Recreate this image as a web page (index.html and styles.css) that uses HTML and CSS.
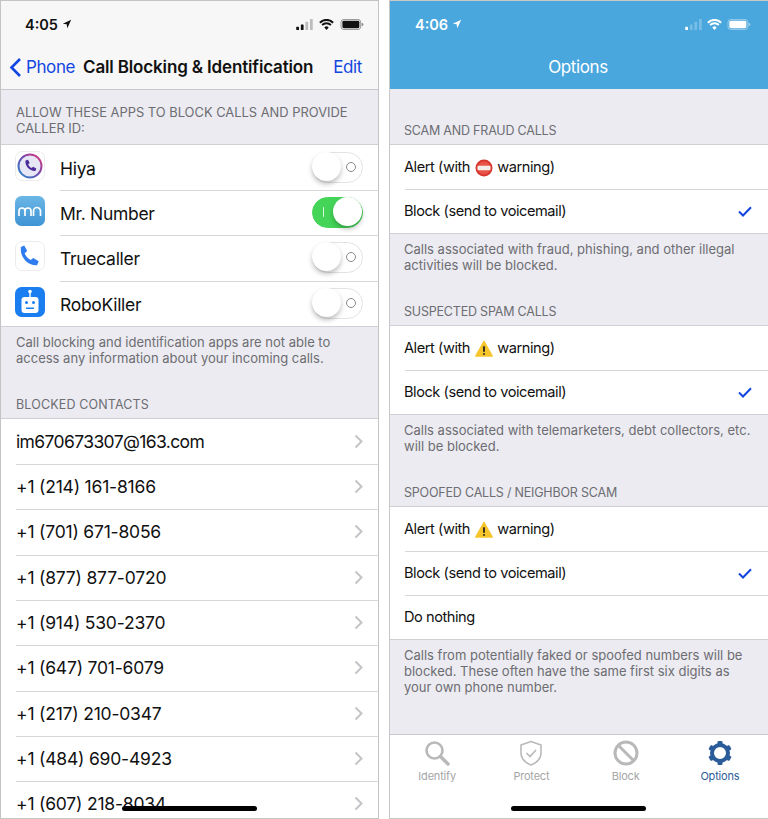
FILE: index.html

```html
<!DOCTYPE html>
<html>
<head>
  <meta charset="UTF-8">
  <title>Call Blocking &amp; Identification</title>
  <link rel="stylesheet" href="styles.css">
</head>
<body>

<div class="screens">

  <!-- left phone: system settings -->
  <div class="phone phone-left">
    <div class="bar">
      <div class="status">
        <span class="time">4:05
          <svg class="arrow" viewBox="0 0 12 12"><path d="M11 1 L1 5.6 L5.6 6.4 L6.4 11 Z"/></svg>
        </span>
        <span class="status-icons">
          <svg class="signal" viewBox="0 0 18 12"><rect x="0" y="8.5" width="3" height="3.5" rx=".6"/><rect x="5" y="6" width="3" height="6" rx=".6"/><rect class="off" x="10" y="3" width="3" height="9" rx=".6"/><rect class="off" x="15" y="0" width="3" height="12" rx=".6"/></svg>
          <svg class="wifi" viewBox="0 0 16 12"><path d="M8 12 L5.6 9.2 A3.4 3.4 0 0 1 10.4 9.2 Z M3.9 7.4 L2.5 5.8 A7.8 7.8 0 0 1 13.5 5.8 L12.1 7.4 A5.8 5.8 0 0 0 3.9 7.4 Z M1.6 4.8 L0 3.2 A11.3 11.3 0 0 1 16 3.2 L14.4 4.8 A9.1 9.1 0 0 0 1.6 4.8 Z"/></svg>
          <svg class="battery" viewBox="0 0 25 12"><rect class="shell" x=".5" y=".5" width="21.5" height="11" rx="3"/><rect x="2" y="2" width="18.5" height="8" rx="1.5"/><path class="nub" d="M23 4 a2 2 0 0 1 0 4 Z"/></svg>
        </span>
      </div>
      <div class="nav">
        <span class="back">
          <svg class="chevron-back" viewBox="0 0 13 21"><path d="M11 2 L2.5 10.5 L11 19"/></svg>
          Phone
        </span>
        <span class="nav-title">Call Blocking &amp; Identification</span>
        <span class="nav-action">Edit</span>
      </div>
    </div>

    <div class="content">
      <div class="head head-apps">ALLOW THESE APPS TO BLOCK CALLS AND PROVIDE CALLER ID:</div>
      <div class="list">
        <div class="row app-row">
          <svg class="app-icon" viewBox="0 0 30 30">
            <defs>
              <linearGradient id="hiyaRing" x1="0" y1="1" x2="1" y2="0"><stop offset="0" stop-color="#2f8fd0"/><stop offset=".5" stop-color="#6a4bb0"/><stop offset="1" stop-color="#e8387c"/></linearGradient>
            </defs>
            <rect x=".5" y=".5" width="29" height="29" rx="6.5" fill="#fff" stroke="#ececec"/>
            <circle cx="15" cy="15" r="11.5" fill="#e6e6f4" stroke="url(#hiyaRing)" stroke-width="2"/>
            <path d="M10.5 9.5 l2.5 -.8 l1.7 3.3 l-1.5 1.3 c.5 1.7 1.8 3.1 3.5 3.8 l1.4 -1.4 l3.2 1.9 l-.9 2.4 c-5.5 .5 -10.8 -5.3 -9.9 -10.5 Z" fill="#4b2a9a"/>
          </svg>
          <span class="row-label">Hiya</span>
          <span class="switch"><span class="switch-ring"></span><span class="knob"></span></span>
        </div>
        <div class="row app-row">
          <svg class="app-icon" viewBox="0 0 30 30">
            <defs>
              <linearGradient id="mrBg" x1="0" y1="0" x2="0" y2="1"><stop offset="0" stop-color="#6bb6e6"/><stop offset="1" stop-color="#3f94d4"/></linearGradient>
            </defs>
            <rect width="30" height="30" rx="6.5" fill="url(#mrBg)"/>
            <path d="M4 20 v-5 a3 3 0 0 1 6 0 v5 M10 15 a3 3 0 0 1 6 0 v5 M18.5 20 v-5 a3.5 3.5 0 0 1 7 0 v5" fill="none" stroke="#fff" stroke-width="1.7"/>
          </svg>
          <span class="row-label">Mr. Number</span>
          <span class="switch switch-on"><span class="switch-bar"></span><span class="knob"></span></span>
        </div>
        <div class="row app-row">
          <svg class="app-icon" viewBox="0 0 30 30">
            <rect x=".5" y=".5" width="29" height="29" rx="6.5" fill="#fff" stroke="#ececec"/>
            <path d="M5 6.5 l4.2 -2 l3 5.5 l-2.5 2.3 c1 2.9 3 5.3 6 6.6 l2.5 -2 l5.5 3.3 l-1.7 4 c-9.5 1 -17.5 -9 -16 -17.7 Z" fill="#2f7cf0"/>
          </svg>
          <span class="row-label">Truecaller</span>
          <span class="switch"><span class="switch-ring"></span><span class="knob"></span></span>
        </div>
        <div class="row app-row">
          <svg class="app-icon" viewBox="0 0 30 30">
            <rect width="30" height="30" rx="6.5" fill="#1a7df0"/>
            <circle cx="15" cy="4.5" r="1.8" fill="#fff"/>
            <rect x="14.3" y="5" width="1.4" height="5" fill="#fff"/>
            <rect x="6.5" y="10" width="17" height="16" rx="3" fill="#fff"/>
            <circle cx="11.5" cy="15.5" r="1.5" fill="#1a7df0"/>
            <circle cx="18.5" cy="15.5" r="1.5" fill="#1a7df0"/>
            <rect x="11" y="20.5" width="8" height="1.5" fill="#1a7df0"/>
          </svg>
          <span class="row-label">RoboKiller</span>
          <span class="switch"><span class="switch-ring"></span><span class="knob"></span></span>
        </div>
      </div>
      <div class="foot foot-apps">Call blocking and identification apps are not able to access any information about your incoming calls.</div>

      <div class="head head-blocked">BLOCKED CONTACTS</div>
      <div class="list">
        <div class="row contact-row"><span class="row-label contact-email">im670673307@163.com</span><svg class="chevron" viewBox="0 0 9 15"><path d="M1.5 1.5 L7.5 7.5 L1.5 13.5"/></svg></div>
        <div class="row contact-row"><span class="row-label">+1 (214) 161-8166</span><svg class="chevron" viewBox="0 0 9 15"><path d="M1.5 1.5 L7.5 7.5 L1.5 13.5"/></svg></div>
        <div class="row contact-row"><span class="row-label">+1 (701) 671-8056</span><svg class="chevron" viewBox="0 0 9 15"><path d="M1.5 1.5 L7.5 7.5 L1.5 13.5"/></svg></div>
        <div class="row contact-row"><span class="row-label">+1 (877) 877-0720</span><svg class="chevron" viewBox="0 0 9 15"><path d="M1.5 1.5 L7.5 7.5 L1.5 13.5"/></svg></div>
        <div class="row contact-row"><span class="row-label">+1 (914) 530-2370</span><svg class="chevron" viewBox="0 0 9 15"><path d="M1.5 1.5 L7.5 7.5 L1.5 13.5"/></svg></div>
        <div class="row contact-row"><span class="row-label">+1 (647) 701-6079</span><svg class="chevron" viewBox="0 0 9 15"><path d="M1.5 1.5 L7.5 7.5 L1.5 13.5"/></svg></div>
        <div class="row contact-row"><span class="row-label">+1 (217) 210-0347</span><svg class="chevron" viewBox="0 0 9 15"><path d="M1.5 1.5 L7.5 7.5 L1.5 13.5"/></svg></div>
        <div class="row contact-row"><span class="row-label">+1 (484) 690-4923</span><svg class="chevron" viewBox="0 0 9 15"><path d="M1.5 1.5 L7.5 7.5 L1.5 13.5"/></svg></div>
        <div class="row contact-row"><span class="row-label">+1 (607) 218-8034</span><svg class="chevron" viewBox="0 0 9 15"><path d="M1.5 1.5 L7.5 7.5 L1.5 13.5"/></svg></div>
      </div>
    </div>
    <div class="home-bar"></div>
  </div>

  <!-- right phone: app options -->
  <div class="phone phone-right">
    <div class="bar bar-blue">
      <div class="status">
        <span class="time">4:06
          <svg class="arrow" viewBox="0 0 12 12"><path d="M11 1 L1 5.6 L5.6 6.4 L6.4 11 Z"/></svg>
        </span>
        <span class="status-icons">
          <svg class="signal" viewBox="0 0 18 12"><rect x="0" y="8.5" width="3" height="3.5" rx=".6"/><rect class="off" x="5" y="6" width="3" height="6" rx=".6"/><rect class="off" x="10" y="3" width="3" height="9" rx=".6"/><rect class="off" x="15" y="0" width="3" height="12" rx=".6"/></svg>
          <svg class="wifi" viewBox="0 0 16 12"><path d="M8 12 L5.6 9.2 A3.4 3.4 0 0 1 10.4 9.2 Z M3.9 7.4 L2.5 5.8 A7.8 7.8 0 0 1 13.5 5.8 L12.1 7.4 A5.8 5.8 0 0 0 3.9 7.4 Z M1.6 4.8 L0 3.2 A11.3 11.3 0 0 1 16 3.2 L14.4 4.8 A9.1 9.1 0 0 0 1.6 4.8 Z"/></svg>
          <svg class="battery" viewBox="0 0 25 12"><rect class="shell" x=".5" y=".5" width="21.5" height="11" rx="3"/><rect x="2" y="2" width="18.5" height="8" rx="1.5"/><path class="nub" d="M23 4 a2 2 0 0 1 0 4 Z"/></svg>
        </span>
      </div>
      <div class="nav nav-center">Options</div>
    </div>

    <div class="content options">
      <div class="head head-option head-first">SCAM AND FRAUD CALLS</div>
      <div class="list">
        <div class="row option-row">
          <span class="row-label">Alert (with
            <svg class="emoji" viewBox="0 0 18 18"><circle cx="9" cy="9" r="8.5" fill="#d8352e"/><circle cx="9" cy="9" r="6.5" fill="#e8544a"/><rect x="2.5" y="6.8" width="13" height="4.4" rx=".8" fill="#f4ece8"/></svg>
            warning)</span>
        </div>
        <div class="row option-row">
          <span class="row-label">Block (send to voicemail)</span>
          <svg class="check" viewBox="0 0 14 11"><path d="M1 5.5 L5 9.5 L13 1.2"/></svg>
        </div>
      </div>
      <div class="foot foot-option">Calls associated with fraud, phishing, and other illegal activities will be blocked.</div>

      <div class="head head-option">SUSPECTED SPAM CALLS</div>
      <div class="list">
        <div class="row option-row">
          <span class="row-label">Alert (with
            <svg class="emoji" viewBox="0 0 18 18"><path d="M9 1.5 L17.2 16 H.8 Z" fill="#f6c52c" stroke="#f6c52c" stroke-width="1.5" stroke-linejoin="round"/><rect x="8" y="6" width="2" height="6" rx="1" fill="#3a3324"/><circle cx="9" cy="14" r="1.1" fill="#3a3324"/></svg>
            warning)</span>
        </div>
        <div class="row option-row">
          <span class="row-label">Block (send to voicemail)</span>
          <svg class="check" viewBox="0 0 14 11"><path d="M1 5.5 L5 9.5 L13 1.2"/></svg>
        </div>
      </div>
      <div class="foot foot-option">Calls associated with telemarketers, debt collectors, etc. will be blocked.</div>

      <div class="head head-option">SPOOFED CALLS / NEIGHBOR SCAM</div>
      <div class="list">
        <div class="row option-row">
          <span class="row-label">Alert (with
            <svg class="emoji" viewBox="0 0 18 18"><path d="M9 1.5 L17.2 16 H.8 Z" fill="#f6c52c" stroke="#f6c52c" stroke-width="1.5" stroke-linejoin="round"/><rect x="8" y="6" width="2" height="6" rx="1" fill="#3a3324"/><circle cx="9" cy="14" r="1.1" fill="#3a3324"/></svg>
            warning)</span>
        </div>
        <div class="row option-row">
          <span class="row-label">Block (send to voicemail)</span>
          <svg class="check" viewBox="0 0 14 11"><path d="M1 5.5 L5 9.5 L13 1.2"/></svg>
        </div>
        <div class="row option-row"><span class="row-label">Do nothing</span></div>
      </div>
      <div class="foot foot-option">Calls from potentially faked or spoofed numbers will be blocked. These often have the same first six digits as your own phone number.</div>
    </div>

    <div class="tabs">
      <div class="tab">
        <svg class="tab-icon" viewBox="0 0 26 26"><circle cx="10.5" cy="10.5" r="8" fill="none" stroke="currentColor" stroke-width="2.6"/><path d="M16.5 16.5 L24 24" stroke="currentColor" stroke-width="3.4" stroke-linecap="round"/></svg>
        Identify
      </div>
      <div class="tab">
        <svg class="tab-icon" viewBox="0 0 26 26"><path d="M13 1.5 L23 5 V13 C23 19 18.5 22.8 13 25 C7.5 22.8 3 19 3 13 V5 Z" fill="none" stroke="currentColor" stroke-width="1.6" stroke-linejoin="round"/><path d="M8.5 13 L12 16.5 L18 10" fill="none" stroke="currentColor" stroke-width="1.6"/></svg>
        Protect
      </div>
      <div class="tab">
        <svg class="tab-icon" viewBox="0 0 26 26"><circle cx="13" cy="13" r="11" fill="none" stroke="currentColor" stroke-width="3"/><path d="M5.5 5.5 L20.5 20.5" stroke="currentColor" stroke-width="3"/></svg>
        Block
      </div>
      <div class="tab tab-active">
        <svg class="tab-icon" viewBox="0 0 26 26"><circle cx="13" cy="13" r="8" fill="none" stroke="currentColor" stroke-width="4"/><g fill="currentColor"><rect x="10.5" y="1" width="5" height="5" rx="1"/><rect x="10.5" y="20" width="5" height="5" rx="1"/><rect x="10.5" y="1" width="5" height="5" rx="1" transform="rotate(60 13 13)"/><rect x="10.5" y="1" width="5" height="5" rx="1" transform="rotate(120 13 13)"/><rect x="10.5" y="1" width="5" height="5" rx="1" transform="rotate(240 13 13)"/><rect x="10.5" y="1" width="5" height="5" rx="1" transform="rotate(300 13 13)"/></g></svg>
        Options
      </div>
    </div>
    <div class="home-bar"></div>
  </div>

</div>

</body>
</html>
```

FILE: styles.css

```css
body {
  margin: 0;
  background: #fff;
  font-family: Inter, "Noto Sans", sans-serif;
  color: #111;
}

.screens {
  display: flex;
  justify-content: space-between;
  height: 819px;
}

.phone {
  position: relative;
  display: flex;
  flex-direction: column;
  box-sizing: border-box;
  height: 819px;
  overflow: hidden;
  background: #ebebf1;
  border: 1px solid #c4c4c4;
}
.phone-left { width: 379px; }
.phone-right { width: 379px; border-right: none; border-color: #c8c8c8; }

/* top bars */
.bar {
  flex: none;
  box-sizing: border-box;
  height: 89px;
  background: #f7f7f7;
  border-bottom: 1px solid #c8c8cc;
}
.bar-blue {
  height: 89px;
  margin-top: -1px;
  background: #4aa7dd;
  border-bottom: none;
  color: #fff;
}

.status {
  display: flex;
  justify-content: space-between;
  align-items: center;
  height: 24px;
  padding: 11px 14px 0 24px;
}
.bar-blue .status { padding: 12px 17px 0 25px; }
.time {
  display: flex;
  align-items: center;
  gap: 4px;
  font-size: 14.5px;
  font-weight: 600;
}
.arrow { width: 10px; height: 10px; fill: currentColor; }
.status-icons { display: flex; align-items: center; gap: 5px; }
.phone-left .status-icons { gap: 6px; }
.signal { width: 17px; height: 11px; fill: currentColor; }
.signal .off { opacity: .25; }
.wifi { width: 15px; height: 11px; fill: currentColor; }
.battery { width: 24px; height: 11px; fill: currentColor; }
.battery .shell { fill: none; stroke: currentColor; stroke-opacity: .45; }
.battery .nub { opacity: .45; }

.nav {
  display: flex;
  align-items: center;
  justify-content: space-between;
  height: 44px;
  margin-top: 9px;
  padding: 0 16px 0 8px;
  font-size: 17px;
  color: #1246e0;
}
.back { display: flex; align-items: center; gap: 4px; letter-spacing: -.4px; }
.chevron-back { width: 13px; height: 21px; fill: none; stroke: currentColor; stroke-width: 2.6; }
.nav-title { margin-right: 12px; font-weight: 600; color: #111; letter-spacing: -.15px; }
.nav-action { letter-spacing: -.4px; }
.nav-center {
  justify-content: center;
  padding: 0 2px 0 0;
  color: #fff;
  letter-spacing: -.4px;
}

/* lists */
.content { flex: 1; min-height: 0; }

.head, .foot {
  box-sizing: border-box;
  padding: 0 15px;
  font-size: 12.9px;
  line-height: 16px;
  color: #6d6d72;
}
.head { display: flex; align-items: flex-end; }
.head-apps { height: 54px; padding-bottom: 7px; }
.foot-apps { height: 46px; padding-top: 7px; font-size: 13px; padding-right: 40px; }
.head-blocked { height: 45px; padding-bottom: 5px; font-size: 12.5px; letter-spacing: .15px; }

.head-option { height: 47px; padding: 0 14px 5px; font-size: 12.5px; letter-spacing: -.2px; }
.head-first { height: 55px; }
.foot-option { height: 44px; padding: 7px 16px 0 14px; font-size: 13px; }
.foot-option:last-child { height: auto; }

.list {
  background: #fff;
  border-top: 1px solid #d0d0d4;
  border-bottom: 1px solid #d0d0d4;
}
.row {
  position: relative;
  display: flex;
  align-items: center;
  box-sizing: border-box;
}
.row + .row::before {
  content: "";
  position: absolute;
  top: 0;
  right: 0;
  left: 15px;
  border-top: 1px solid #d8d8dc;
}
.row-label { flex: 1; white-space: nowrap; }

.app-row { height: 45.2px; padding: 0 15px 0 14px; font-size: 17.5px; letter-spacing: -.3px; }
.app-row .row-label { padding-top: 2px; }
.app-row + .app-row::before { left: 59px; }
.app-icon { flex: none; width: 30px; height: 30px; margin-right: 15px; margin-top: -3px; }

.contact-row { height: 45.3px; padding: 0 15px; font-size: 17.5px; letter-spacing: -.2px; }
.contact-email { letter-spacing: -.62px; }
.chevron { width: 9px; height: 15px; fill: none; stroke: #c4c4c8; stroke-width: 2; }

.option-row { height: 44px; padding: 0 16px 0 14px; font-size: 14.6px; letter-spacing: -.45px; }
.emoji { width: 18px; height: 18px; vertical-align: -1.5px; margin: -3px 1px; }
.check { width: 14px; height: 11px; fill: none; stroke: #1246e0; stroke-width: 2; }

/* switches */
.switch {
  position: relative;
  flex: none;
  box-sizing: border-box;
  width: 51px;
  height: 31px;
  border: 1.5px solid #e3e3e3;
  border-radius: 16px;
  background: #fff;
}
.switch-on { background: #44d558; border-color: #44d558; }
.knob {
  position: absolute;
  top: -1px;
  left: -1px;
  width: 29px;
  height: 29px;
  border-radius: 50%;
  background: #fff;
  box-shadow: 0 3px 5px rgba(0,0,0,.25);
}
.switch-on .knob { left: 20px; }
.switch-ring {
  position: absolute;
  top: 9px;
  right: 6px;
  box-sizing: border-box;
  width: 10px;
  height: 10px;
  border: 1.3px solid #8a8a8a;
  border-radius: 50%;
}
.switch-bar {
  position: absolute;
  top: 9px;
  left: 10px;
  width: 1px;
  height: 10px;
  background: #d8f5dc;
}

/* tab bar */
.tabs {
  flex: none;
  display: flex;
  box-sizing: border-box;
  height: 84px;
  padding: 5px 1px 0 0;
  background: #fff;
  border-top: 1px solid #c8c8cc;
}
.tab {
  display: flex;
  flex-direction: column;
  align-items: center;
  flex: 1;
  gap: 3px;
  font-size: 11px;
  letter-spacing: -.2px;
  color: #a6a6a6;
}
.tab-icon { width: 26px; height: 26px; color: #b9b9b9; }
.tab-active, .tab-active .tab-icon { color: #2b5c99; }

.home-bar {
  position: absolute;
  bottom: 7px;
  left: 121px;
  width: 135px;
  height: 5px;
  border-radius: 3px;
  background: #000;
}
```
